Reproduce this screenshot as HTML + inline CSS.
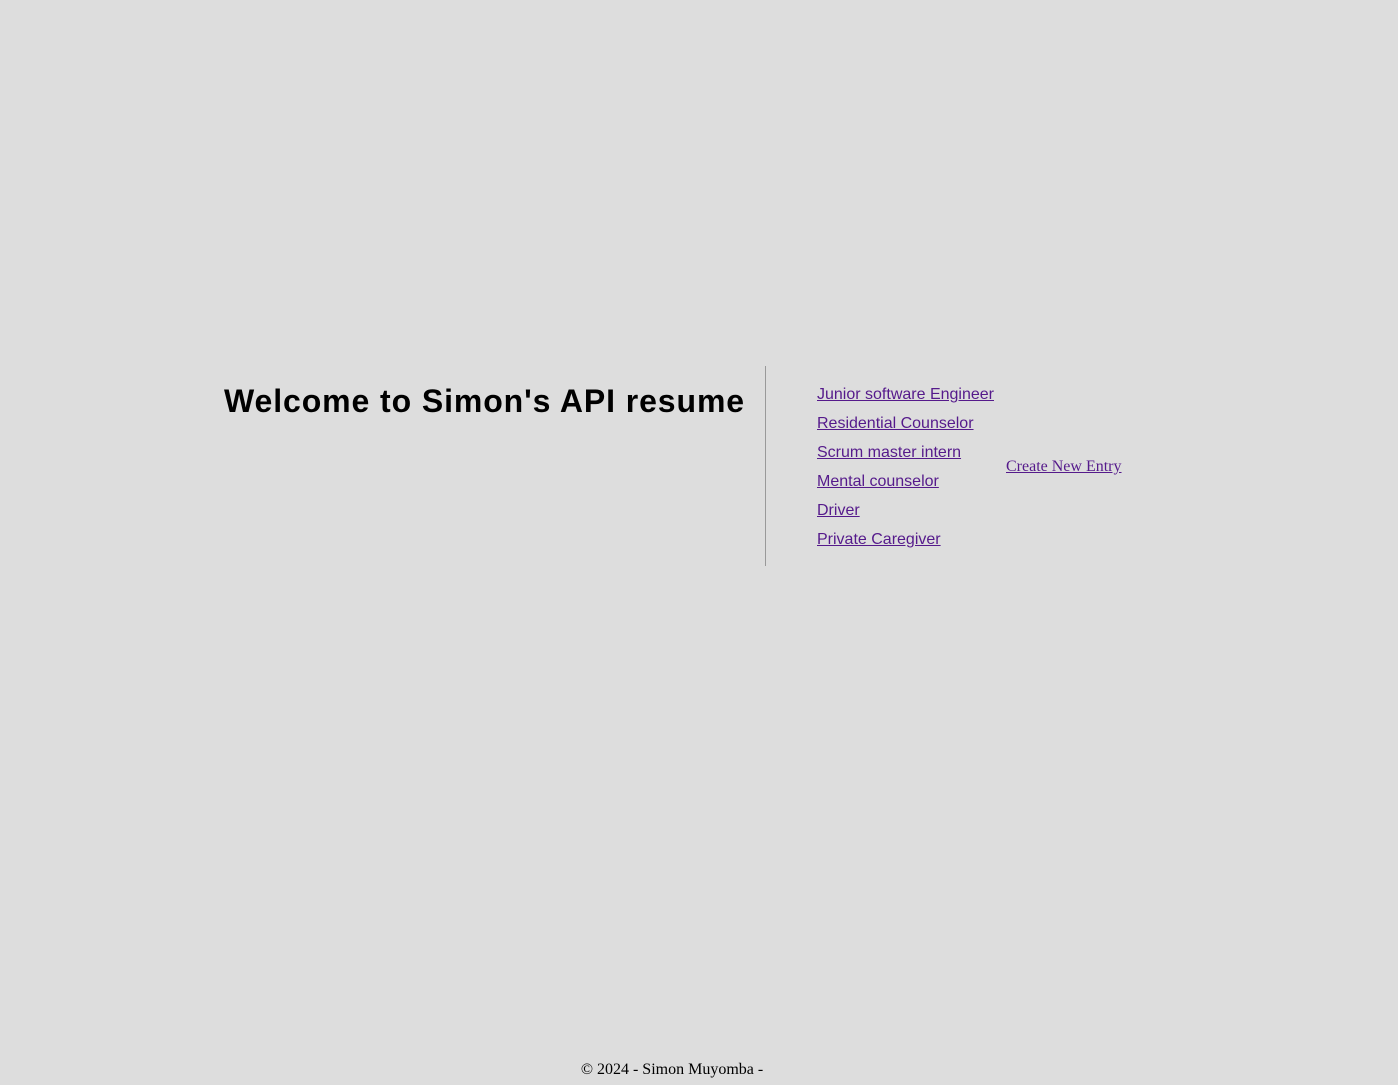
<!DOCTYPE html>
<html><head><meta charset="utf-8"><style>
html,body{margin:0;padding:0;background:#dddddd;width:1398px;height:1085px;overflow:hidden;position:relative}
h1{position:absolute;right:653px;top:379px;margin:0;font:bold 32px "Liberation Sans",sans-serif;letter-spacing:0.9px;color:#000;white-space:nowrap;line-height:44px}
.div{position:absolute;left:765px;top:366px;width:1px;height:200px;background:#999}
ul{position:absolute;left:817px;top:384px;margin:0;padding:0;list-style:none;font:16px "Liberation Sans",sans-serif}
li{height:29px;line-height:22px}
a{color:#551a8b}
.cne{position:absolute;left:1006px;top:458px;font:16px "Liberation Serif",serif;color:#551a8b}
.ft{position:absolute;left:0;width:1344px;text-align:center;top:1061px;font:16px "Liberation Serif",serif;color:#000}
</style></head><body>
<h1>Welcome to Simon's API resume</h1>
<div class="div"></div>
<ul>
<li><a href="#">Junior software Engineer</a></li>
<li><a href="#">Residential Counselor</a></li>
<li><a href="#">Scrum master intern</a></li>
<li><a href="#">Mental counselor</a></li>
<li><a href="#">Driver</a></li>
<li><a href="#">Private Caregiver</a></li>
</ul>
<a class="cne" href="#">Create New Entry</a>
<div class="ft">© 2024 - Simon Muyomba -</div>
</body></html>
